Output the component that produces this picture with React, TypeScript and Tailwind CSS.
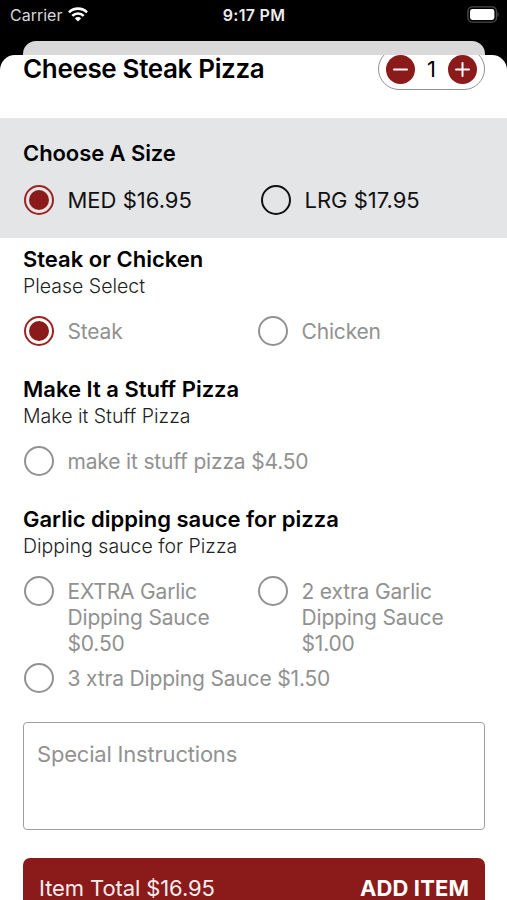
import { useState } from 'react'
import clsx from 'clsx'

type Option = { id: string; label: string }

const SIZES: Option[] = [
  { id: 'med', label: 'MED $16.95' },
  { id: 'lrg', label: 'LRG $17.95' },
]

const PROTEINS: Option[] = [
  { id: 'steak', label: 'Steak' },
  { id: 'chicken', label: 'Chicken' },
]

const SAUCES: Option[] = [
  { id: 'one', label: 'EXTRA Garlic Dipping Sauce $0.50' },
  { id: 'two', label: '2 extra Garlic Dipping Sauce $1.00' },
]

function StatusBar() {
  return (
    <div className="grid h-[30px] shrink-0 grid-cols-[1fr_auto_1fr] items-center pl-[10px] pr-[8px] text-white">
      <div className="flex items-center gap-[6px]">
        <span className="text-[16px] text-[#d6d6d6]">Carrier</span>
        <svg className="-mt-px" width="20" height="15" viewBox="0 0 20 15" fill="none" stroke="#fff" strokeWidth="2.6">
          <path d="M1 5.3a12.8 12.8 0 0 1 18 0" />
          <path d="M4.3 8.8a8.1 8.1 0 0 1 11.4 0" />
          <path d="M10 14.6 6.9 11.4a4.4 4.4 0 0 1 6.2 0Z" fill="#fff" stroke="none" />
        </svg>
      </div>
      <span className="-ml-px text-[16px] font-semibold tracking-[0.3px] text-[#ececec]">9:17 PM</span>
      <svg className="-mt-[2px] justify-self-end" width="33" height="17" viewBox="0 0 33 17" fill="none">
        <rect x="1.9" y="0.9" width="28.6" height="15.2" rx="4.4" stroke="#4a4a4a" strokeWidth="1.4" />
        <rect x="4" y="3" width="24.4" height="11" rx="2.4" fill="#fff" />
        <path d="M31.5 6v5c1.6-.6 1.6-4.4 0-5Z" fill="#4a4a4a" />
      </svg>
    </div>
  )
}

function Radio({ checked, dark }: { checked?: boolean; dark?: boolean }) {
  return (
    <span
      className={clsx(
        'flex size-[30px] shrink-0 items-center justify-center rounded-full border-2',
        checked ? 'border-[#9c2322]' : dark ? 'border-[#111]' : 'border-[#929292]'
      )}
    >
      {checked && <span className="size-5 rounded-full bg-[#8b1a1a]" />}
    </span>
  )
}

function Choice({ option, checked, onClick }: { option: Option; checked?: boolean; onClick?: () => void }) {
  return (
    <button onClick={onClick} className="flex items-start gap-[13.5px] text-left">
      <span className="-my-0.5 flex">
        <Radio checked={checked} />
      </span>
      <span className="mt-px -mb-px text-[21px] leading-[26px] tracking-[-0.17px] text-[#919191]">{option.label}</span>
    </button>
  )
}

function SectionTitle({ title, subtitle }: { title: string; subtitle: string }) {
  return (
    <div className="mb-[19px]">
      <h2 className="text-[22px] leading-7 font-semibold">{title}</h2>
      <p className="text-[19.5px] leading-[26px] font-light text-[#222]">{subtitle}</p>
    </div>
  )
}

function Stepper({ qty, onChange }: { qty: number; onChange: (n: number) => void }) {
  return (
    <div className="-mt-[7px] flex h-[42px] w-[107px] items-center justify-between rounded-full border border-[#929292] px-[6.5px]">
      <button onClick={() => onChange(Math.max(1, qty - 1))} className="size-[29px] rounded-full bg-[#8b1a1a]">
        <svg viewBox="0 0 29 29" stroke="#fff" strokeWidth="2" strokeLinecap="round">
          <path d="M8 14.5h13" />
        </svg>
      </button>
      <span className="text-[22px] leading-none">{qty}</span>
      <button onClick={() => onChange(qty + 1)} className="size-[29px] rounded-full bg-[#8b1a1a]">
        <svg viewBox="0 0 29 29" stroke="#fff" strokeWidth="2" strokeLinecap="round">
          <path d="M8 14.5h13M14.5 8v13" />
        </svg>
      </button>
    </div>
  )
}

export default function App() {
  const [qty, setQty] = useState(1)
  const [size, setSize] = useState('med')
  const [protein, setProtein] = useState('steak')
  const [stuffed, setStuffed] = useState(false)
  const [sauce, setSauce] = useState('')

  return (
    <div className="flex h-[900px] w-[507px] flex-col overflow-hidden bg-black font-[Inter,sans-serif] text-black">
      <StatusBar />
      {/* edge of the screen behind the sheet */}
      <div className="mr-[22px] ml-[23px] mt-[11px] h-[14px] shrink-0 rounded-t-[13px] bg-[#d9d9d9]" />

      <div className="flex flex-1 flex-col rounded-t-[15px] bg-white">
        <div className="flex h-[63px] shrink-0 items-start justify-between pr-[22px] pl-[23px]">
          <h1 className="text-[26px] leading-[28px] font-semibold tracking-[-0.35px]">Cheese Steak Pizza</h1>
          {/* stepper is scrolled slightly under the sheet's top edge */}
          <div className="overflow-hidden">
            <Stepper qty={qty} onChange={setQty} />
          </div>
        </div>

        <div className="h-[120px] shrink-0 bg-[#e4e5e7] px-[23px] pt-[21px]">
          <h2 className="text-[22px] leading-7 font-semibold tracking-[-0.08px]">Choose A Size</h2>
          <div className="mt-[18px] grid grid-cols-[237px_1fr] pl-px">
            {SIZES.map(s => (
              <button key={s.id} onClick={() => setSize(s.id)} className="flex items-center gap-[13.5px]">
                <Radio checked={size === s.id} dark />
                <span className="text-[22px] leading-[30px] text-[#111]">{s.label}</span>
              </button>
            ))}
          </div>
        </div>

        <div className="flex flex-1 flex-col px-[23px] pt-[7px]">
          <SectionTitle title="Steak or Chicken" subtitle="Please Select" />
          <div className="mb-[31px] grid grid-cols-[234px_1fr] pl-px">
            {PROTEINS.map(p => (
              <Choice key={p.id} option={p} checked={protein === p.id} onClick={() => setProtein(p.id)} />
            ))}
          </div>

          <SectionTitle title="Make It a Stuff Pizza" subtitle="Make it Stuff Pizza" />
          <div className="mb-[31px] pl-px">
            <Choice
              option={{ id: 'stuff', label: 'make it stuff pizza $4.50' }}
              checked={stuffed}
              onClick={() => setStuffed(!stuffed)}
            />
          </div>

          <SectionTitle title="Garlic dipping sauce for pizza" subtitle="Dipping sauce for Pizza" />
          <div className="grid grid-cols-[234px_1fr] pr-[24px] pl-px">
            {SAUCES.map(s => (
              <Choice key={s.id} option={s} checked={sauce === s.id} onClick={() => setSauce(s.id)} />
            ))}
          </div>
          <div className="mt-[9px] pl-px">
            <Choice
              option={{ id: 'three', label: '3 xtra Dipping Sauce $1.50' }}
              checked={sauce === 'three'}
              onClick={() => setSauce('three')}
            />
          </div>

          <textarea
            placeholder="Special Instructions"
            className="mt-[31px] mr-[-1px] h-[108px] shrink-0 resize-none rounded-[4px] border-[1.5px] border-[#a0a0a0] px-[13px] pt-[17px] text-[22px] leading-7 tracking-[-0.2px] placeholder:text-[#929292]"
          />

          <button className="mt-[28px] mr-[-1px] flex h-[60px] shrink-0 items-center justify-between rounded-[7px] bg-[#8b1a1a] px-4 text-white">
            <span className="text-[22px] tracking-[-0.1px] text-[#fbeeee]">Item Total $16.95</span>
            <span className="text-[22px] font-bold tracking-[0.1px]">ADD ITEM</span>
          </button>
        </div>
      </div>
    </div>
  )
}
